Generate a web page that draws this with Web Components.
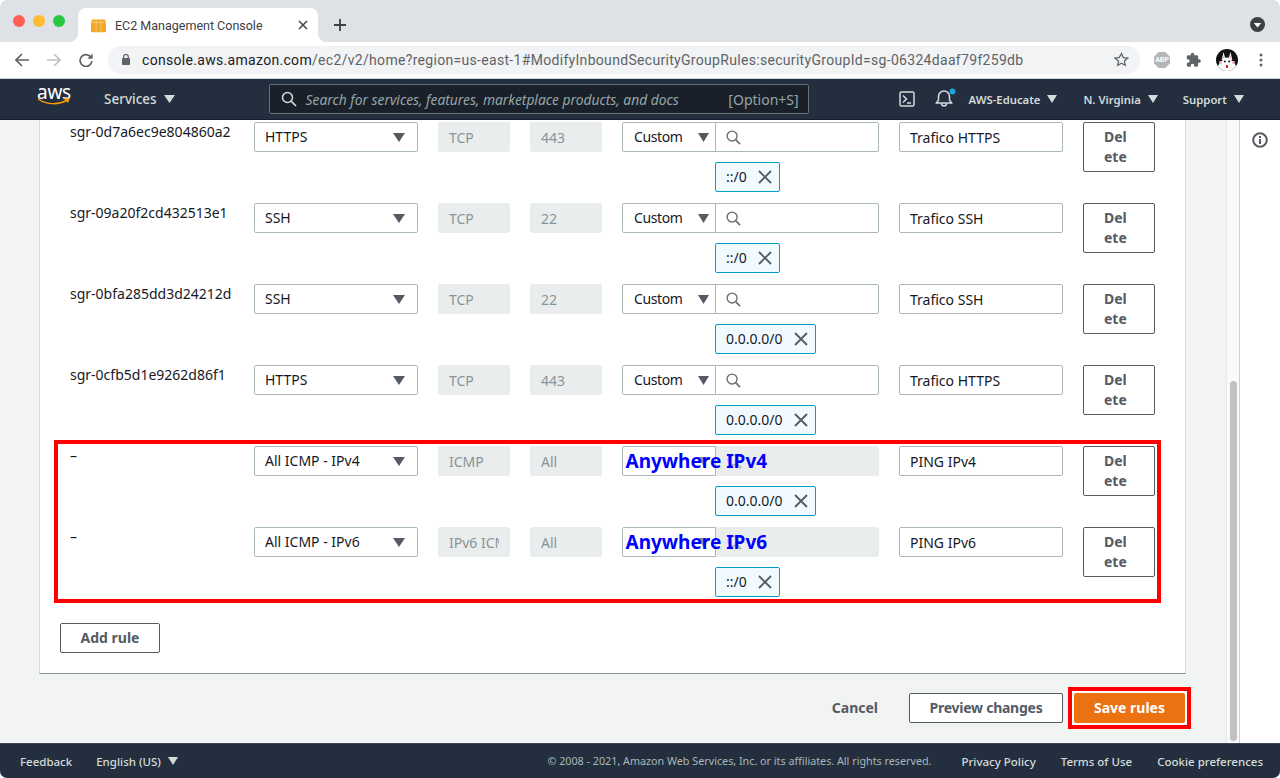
<!DOCTYPE html>
<html lang="en">
<head>
<meta charset="utf-8">
<title>EC2 Management Console</title>
<style>
  html, body { margin: 0; height: 100%; background: #fff; overflow: hidden; }
  body { font-family: "Noto Sans", "Open Sans", sans-serif; font-size: 14px; color: #16191f; }
</style>
</head>
<body>
<console-window>
  <browser-tabs slot="tabs" tab-title="EC2 Management Console"></browser-tabs>
  <browser-toolbar slot="toolbar" host-part="console.aws.amazon.com" path-part="/ec2/v2/home?region=us-east-1#ModifyInboundSecurityGroupRules:securityGroupId=sg-06324daaf79f259db"></browser-toolbar>
  <aws-nav slot="nav"></aws-nav>

  <rules-card>
    <rule-row rule-id="sgr-0d7a6ec9e804860a2" type="HTTPS" protocol="TCP" port="443" desc="Trafico HTTPS" chip="::/0"></rule-row>
    <rule-row rule-id="sgr-09a20f2cd432513e1" type="SSH" protocol="TCP" port="22" desc="Trafico SSH" chip="::/0"></rule-row>
    <rule-row rule-id="sgr-0bfa285dd3d24212d" type="SSH" protocol="TCP" port="22" desc="Trafico SSH" chip="0.0.0.0/0"></rule-row>
    <rule-row rule-id="sgr-0cfb5d1e9262d86f1" type="HTTPS" protocol="TCP" port="443" desc="Trafico HTTPS" chip="0.0.0.0/0"></rule-row>
    <red-frame stack>
      <rule-row rule-id="–" type="All ICMP - IPv4" protocol="ICMP" port="All" desc="PING IPv4" chip="0.0.0.0/0" note="Anywhere IPv4"></rule-row>
      <rule-row rule-id="–" type="All ICMP - IPv6" protocol="IPv6 ICMP" port="All" desc="PING IPv6" chip="::/0" note="Anywhere IPv6"></rule-row>
    </red-frame>
    <aws-button slot="add" style="width:100px">Add rule</aws-button>
  </rules-card>

  <form-actions></form-actions>
  <aws-footer slot="footer"></aws-footer>
</console-window>

<script>
const caret = (w, h, color) => `<svg width="${w}" height="${h}" viewBox="0 0 12 9" preserveAspectRatio="none" style="display:block;flex:none"><path d="M0 0h12L6 9z" fill="${color}"/></svg>`;

class ConsoleWindow extends HTMLElement {
  constructor() {
    super();
    this.attachShadow({ mode: "open" }).innerHTML = `
    <style>
      :host { display: flex; flex-direction: column; width: 1280px; height: 778px; border-radius: 7px; overflow: hidden; background: #fff; }
      .main { flex: 1; min-height: 0; display: flex; }
      .content { flex: 1; min-width: 0; background: #f2f3f3; border-right: 1px solid #e8e8e8; display: flex; flex-direction: column; }
      .scrollbar { width: 13px; background: #fafafa; border-right: 1px solid #cfd2d2; padding: 261px 2px 2px 3px; box-sizing: border-box; }
      .thumb { height: 100%; background: #c1c1c1; border-radius: 4px; }
      .side { width: 40px; background: #fff; display: flex; justify-content: center; padding-top: 12px; box-sizing: border-box; }
    </style>
    <slot name="tabs"></slot>
    <slot name="toolbar"></slot>
    <slot name="nav"></slot>
    <div class="main">
      <div class="content"><slot></slot></div>
      <div class="scrollbar"><div class="thumb"></div></div>
      <div class="side">
        <svg width="16" height="16" viewBox="0 0 16 16"><circle cx="8" cy="8" r="6.800" fill="none" stroke="#545b64" stroke-width="2"/><rect x="7" y="7" width="2" height="5" fill="#545b64"/><rect x="7" y="4" width="2" height="2" fill="#545b64"/></svg>
      </div>
    </div>
    <slot name="footer"></slot>`;
  }
}
customElements.define("console-window", ConsoleWindow);

class BrowserTabs extends HTMLElement {
  constructor() {
    super();
    this.attachShadow({ mode: "open" });
  }

  connectedCallback() {
    this.shadowRoot.innerHTML = `
    <style>
      :host { display: flex; align-items: flex-end; height: 42px; background: #dee1e6; flex: none; font-family: Roboto, sans-serif; }
      .lights { display: flex; gap: 8px; width: 78px; padding: 0 0 15px 13px; box-sizing: border-box; }
      .lights i { width: 12px; height: 12px; border-radius: 50%; }
      .tab { width: 240px; height: 34px; background: #fff; border-radius: 8px 8px 0 0; display: flex; align-items: center; padding: 0 10px 0 13px; box-sizing: border-box; position: relative; color: #3c4043; font-size: 12.5px; }
      .tab::before, .tab::after { content: ""; position: absolute; bottom: 0; width: 8px; height: 8px; }
      .tab::before { left: -8px; background: radial-gradient(circle at 0 0, #dee1e6 7.5px, #fff 8px); }
      .tab::after { right: -8px; background: radial-gradient(circle at 100% 0, #dee1e6 7.5px, #fff 8px); }
      .title { margin-left: 9px; flex: 1; white-space: nowrap; }
      .plus { margin: 0 0 10px 15px; }
      .menu { margin: 0 15px 10px auto; }
    </style>
    <div class="lights"><i style="background:#ff5f57"></i><i style="background:#febc2e"></i><i style="background:#28c840"></i></div>
    <div class="tab">
      <svg width="15" height="15" viewBox="0 0 15 15"><path d="M1 1.600h13l1 2.600v9a1 1 0 0 1-1 1H1a1 1 0 0 1-1-1v-9z" fill="#f5a623"/><path d="M0 4.400h15M5.200 1.600v3M9.800 1.600v3M5.200 4.400v10M9.800 4.400v10" stroke="#fcd58a" stroke-width=".7"/></svg>
      <span class="title">${this.getAttribute("tab-title")}</span>
      <svg width="10" height="10" viewBox="0 0 10 10"><path d="M1 1l8 8M9 1l-8 8" stroke="#45494d" stroke-width="1.600"/></svg>
    </div>
    <svg class="plus" width="14" height="14" viewBox="0 0 14 14"><path d="M7 1v12M1 7h12" stroke="#3c4043" stroke-width="1.800"/></svg>
    <svg class="menu" width="15" height="15" viewBox="0 0 15 15"><circle cx="7.500" cy="7.500" r="7.500" fill="#3c4043"/><path d="M3.800 6h7.400l-3.700 4.400z" fill="#fff"/></svg>`;
  }
}
customElements.define("browser-tabs", BrowserTabs);

class BrowserToolbar extends HTMLElement {
  constructor() {
    super();
    this.attachShadow({ mode: "open" });
  }

  connectedCallback() {
    this.shadowRoot.innerHTML = `
    <style>
      :host { display: flex; align-items: center; height: 37px; background: #fff; flex: none; padding: 0 0 1px 0; box-sizing: border-box; font-family: Roboto, sans-serif; border-bottom: 1px solid #d0d3d8; }
      .nav { display: flex; width: 108px; padding-left: 15px; gap: 18px; box-sizing: border-box; }
      .omni { width: 1032px; height: 28px; background: #f1f3f4; border-radius: 14px; display: flex; align-items: center; padding: 0 11px 0 14px; box-sizing: border-box; }
      .url { margin-left: 12px; flex: 1; font-size: 14px; letter-spacing: .31px; color: #5f6368; white-space: nowrap; }
      .url b { font-weight: 400; color: #202124; }
      .right { display: flex; align-items: center; }
      .abp { font: 700 6.500px "Liberation Sans", sans-serif; fill: #fff; }
    </style>
    <div class="nav">
      <svg width="14" height="14" viewBox="0 0 14 14"><path d="M14 7H1.500M7 1L1 7l6 6" fill="none" stroke="#5f6368" stroke-width="1.700"/></svg>
      <svg width="14" height="14" viewBox="0 0 14 14"><path d="M0 7h12.500M7 1l6 6-6 6" fill="none" stroke="#bdc1c6" stroke-width="1.700"/></svg>
      <svg width="14" height="14" viewBox="0 0 14 14"><path d="M12 4.400A5.900 5.900 0 1 0 12.900 8" fill="none" stroke="#5f6368" stroke-width="1.700"/><path d="M13.600 0.600v5.200H8.400z" fill="#5f6368"/></svg>
    </div>
    <div class="omni">
      <svg width="8" height="11" viewBox="0 0 8 11" style="flex:none"><path d="M1.700 4V2.700a2.300 2.300 0 0 1 4.600 0V4" fill="none" stroke="#5f6368" stroke-width="1.200"/><rect y="4" width="8" height="7" rx="1" fill="#5f6368"/></svg>
      <span class="url"><b>${this.getAttribute("host-part")}</b>${this.getAttribute("path-part")}</span>
      <svg width="15" height="15" viewBox="0 0 24 24" style="flex:none"><path d="M12 2.500l2.900 6.400 7 .8-5.200 4.700 1.400 6.900-6.100-3.500-6.100 3.500 1.400-6.900L1.100 9.700l7-.8z" fill="none" stroke="#5f6368" stroke-width="2"/></svg>
    </div>
    <div class="right">
      <svg width="16" height="16" viewBox="0 0 16 16" style="margin-left:14px"><path d="M4.700 0h6.600L16 4.700v6.600L11.300 16H4.700L0 11.300V4.700z" fill="#b3b5b8"/><text class="abp" x="8" y="10.400" text-anchor="middle">ABP</text></svg>
      <svg width="17" height="16" viewBox="0 0 24 24" style="margin-left:15px"><path d="M20.500 11H19V7a2 2 0 0 0-2-2h-4V3.500a2.500 2.500 0 0 0-5 0V5H4a2 2 0 0 0-2 2v3.800h1.500a2.700 2.700 0 0 1 0 5.400H2V20a2 2 0 0 0 2 2h3.800v-1.500a2.700 2.700 0 0 1 5.400 0V22H17a2 2 0 0 0 2-2v-4h1.500a2.500 2.500 0 0 0 0-5z" fill="#5f6368"/></svg>
      <svg width="22" height="22" viewBox="0 0 22 22" style="margin-left:14px">
        <circle cx="11" cy="11" r="11" fill="#111"/>
        <path d="M1.800 17a11 11 0 0 0 18.400 0L17 12H5z" fill="#fff"/>
        <path d="M7.500 3l2.200 8h-4zM14.500 3l-2.200 8h4z" fill="#fff"/>
        <path d="M7.500 5.500l1 5H6.600zM14.500 5.500l-1 5h1.900z" fill="#f0b0b8"/>
        <circle cx="11" cy="13.500" r="5" fill="#fff"/>
        <circle cx="8.800" cy="12.500" r="1" fill="#111"/><circle cx="13.200" cy="12.500" r="1" fill="#111"/>
        <circle cx="4.500" cy="13.500" r="1.400" fill="#f0b0b8"/><circle cx="17.500" cy="13.500" r="1.400" fill="#f0b0b8"/>
        <path d="M10 16h2v3h-2z" fill="#d22"/>
      </svg>
      <svg width="4" height="14" viewBox="0 0 4 14" style="margin-left:21px"><circle cx="2" cy="2" r="1.500" fill="#5f6368"/><circle cx="2" cy="7" r="1.500" fill="#5f6368"/><circle cx="2" cy="12" r="1.500" fill="#5f6368"/></svg>
    </div>`;
  }
}
customElements.define("browser-toolbar", BrowserToolbar);

class AwsNav extends HTMLElement {
  constructor() {
    super();
    this.attachShadow({ mode: "open" });
  }

  connectedCallback() {
    this.shadowRoot.innerHTML = `
    <style>
      :host { display: flex; align-items: center; height: 41px; background: #232f3e; flex: none; color: #d5dbdb; box-sizing: border-box; border-bottom: 1px solid #161e2d; }
      .logo { width: 34px; margin-left: 37px; display: flex; flex-direction: column; align-items: center; color: #fff; font-size: 19px; line-height: 16px; height: 30px; letter-spacing: -.3px; }
      .logo svg { margin-top: -2px; }
      .menu { display: inline-flex; align-items: center; font-weight: 500; }
      .services { margin-left: 33px; font-size: 13.5px; gap: 7px; }
      .search { margin-left: 94px; width: 540px; height: 30px; box-sizing: border-box; background: #1a2029; border: 1px solid #687078; border-radius: 2px; display: flex; align-items: center; padding: 0 9px 0 11px; color: #95a5a6; }
      .search em { margin-left: 9px; flex: 1; font-size: 13.8px; white-space: nowrap; }
      .search span { font-size: 14px; }
      .small { font-size: 11.3px; font-weight: 600; gap: 7px; }
    </style>
    <div class="logo">aws<svg width="34" height="7" viewBox="0 0 34 7"><path d="M1 1c9 6 21 6 29 1" fill="none" stroke="#f90" stroke-width="1.500"/><path d="M27 .5l6-.5-2 5z" fill="#f90"/></svg></div>
    <span class="menu services">Services ${caret(11, 8, "#d5dbdb")}</span>
    <div class="search">
      <svg width="16" height="16" viewBox="0 0 16 16" style="flex:none"><circle cx="6.500" cy="6.500" r="5" fill="none" stroke="#d5dbdb" stroke-width="1.500"/><path d="M10 10l5 5" stroke="#d5dbdb" stroke-width="1.700"/></svg>
      <em>Search for services, features, marketplace products, and docs</em>
      <span>[Option+S]</span>
    </div>
    <svg width="16" height="16" viewBox="0 0 16 16" style="margin-left:90px"><rect x="1" y="1" width="14" height="14" rx="1.500" fill="none" stroke="#d5dbdb" stroke-width="1.500"/><path d="M4 4.500L7.500 8 4 11.500M8 12h4" fill="none" stroke="#d5dbdb" stroke-width="1.500"/></svg>
    <svg width="24" height="20" viewBox="0 0 24 20" style="margin-left:20px;margin-top:-2px"><path d="M1.500 15h15l-2-3V8.500a5.500 5.500 0 0 0-11 0V12z" fill="none" stroke="#d5dbdb" stroke-width="1.500"/><path d="M6.500 15.500a2.500 2.500 0 0 0 5 0" fill="none" stroke="#d5dbdb" stroke-width="1.500"/><circle cx="17.500" cy="3.500" r="3" fill="#1da5d8"/></svg>
    <span class="menu small" style="margin-left:10px">AWS-Educate ${caret(10, 8, "#d5dbdb")}</span>
    <span class="menu small" style="margin-left:26px">N. Virginia ${caret(10, 8, "#d5dbdb")}</span>
    <span class="menu small" style="margin-left:25px">Support ${caret(10, 8, "#d5dbdb")}</span>`;
  }
}
customElements.define("aws-nav", AwsNav);

class AwsButton extends HTMLElement {
  constructor() {
    super();
    this.attachShadow({ mode: "open" }).innerHTML = `
    <style>
      :host { display: inline-flex; align-items: center; justify-content: center; box-sizing: border-box; min-height: 30px; padding: 0 20px; border: 1px solid #545b64; border-radius: 2px; background: #fff; color: #545b64; font-weight: 700; font-size: 14px; line-height: 20px; white-space: nowrap; }
      :host([variant="primary"]) { background: #ec7211; border-color: #ec7211; color: #fff; }
      :host([variant="link"]) { background: none; border-color: transparent; }
      :host([variant="wrap"]) { width: 72px; height: 50px; white-space: normal; word-break: break-all; }
    </style>
    <slot></slot>`;
  }
}
customElements.define("aws-button", AwsButton);

class RedFrame extends HTMLElement {
  constructor() {
    super();
    this.attachShadow({ mode: "open" }).innerHTML = `
    <style>
      :host { display: block; position: relative; }
      :host([stack]) { display: grid; row-gap: 11px; }
      .frame { position: absolute; inset: -6px; border: 4px solid #f00; pointer-events: none; }
      :host([tight]) .frame { box-shadow: inset 0 0 0 2px #fff; }
    </style>
    <slot></slot>
    <div class="frame"></div>`;
  }
}
customElements.define("red-frame", RedFrame);

class RuleRow extends HTMLElement {
  constructor() {
    super();
    this.attachShadow({ mode: "open" });
  }

  connectedCallback() {
    const a = (n) => this.getAttribute(n);
    const note = a("note");
    this.shadowRoot.innerHTML = `
    <style>
      :host { display: grid; grid-template-columns: 164px 164px 72px 72px 257px 164px 72px; column-gap: 20px; padding-left: 10px; height: 70px; font-size: 14px; line-height: 20px; color: #16191f; }
      .box { height: 30px; box-sizing: border-box; display: flex; align-items: center; border: 1px solid #aab7b8; border-radius: 2px; background: #fff; }
      .select { padding: 0 12px 0 10px; justify-content: space-between; }
      .off { background: #eaeded; border-color: #eaeded; color: #879596; padding: 2px 10px 0; }
      .off span { display: block; overflow: hidden; white-space: nowrap; }
      .source { position: relative; }
      .pair { display: flex; }
      .custom { width: 94px; flex: none; border-radius: 2px 0 0 2px; padding: 0 6px 0 11px; justify-content: space-between; letter-spacing: -.4px; }
      .locked .custom { justify-content: flex-end; }
      .find { flex: 1; margin-left: -1px; border-radius: 0 2px 2px 0; padding-left: 10px; }
      .locked .find { background: #eaeded; border-color: #eaeded; margin-left: 0; }
      .chip { display: inline-flex; align-items: center; height: 30px; box-sizing: border-box; margin: 10px 0 0 93px; padding: 0 7px 0 10px; gap: 11px; background: #f1faff; border: 1px solid #00a1c9; border-radius: 2px; }
      .desc { padding: 2px 10px 0; white-space: nowrap; }
      .note { position: absolute; left: 3.500px; top: 3px; color: #00f; font: 700 19px/24px "Noto Sans", sans-serif; white-space: nowrap; }
    </style>
    <div class="id">${a("rule-id")}</div>
    <div class="box select">${a("type")} ${caret(12, 9, "#545b64")}</div>
    <div class="box off"><span>${a("protocol")}</span></div>
    <div class="box off"><span>${a("port")}</span></div>
    <div class="source ${note ? "locked" : ""}">
      <div class="pair">
        <div class="box custom">${note ? "" : "Custom "}${caret(11, 9, note ? "#8a9096" : "#545b64")}</div>
        <div class="box find"><svg width="15" height="15" viewBox="0 0 16 16"><circle cx="6.500" cy="6.500" r="5.300" fill="none" stroke="${note ? "#a8aeb2" : "#687078"}" stroke-width="1.500"/><path d="M10.300 10.300l4.700 4.700" stroke="${note ? "#a8aeb2" : "#687078"}" stroke-width="1.800"/></svg></div>
      </div>
      <div class="chip">${a("chip")}<svg width="14" height="14" viewBox="0 0 14 14"><path d="M1 1l12 12M13 1L1 13" stroke="#545b64" stroke-width="1.800"/></svg></div>
      ${note ? `<div class="note">${note}</div>` : ""}
    </div>
    <div class="box desc">${a("desc")}</div>
    <div><aws-button variant="wrap">Delete</aws-button></div>`;
  }
}
customElements.define("rule-row", RuleRow);

class RulesCard extends HTMLElement {
  constructor() {
    super();
    this.attachShadow({ mode: "open" }).innerHTML = `
    <style>
      :host { display: block; margin: 0 40px 0 39px; background: #fff; flex: none; box-sizing: border-box; height: 554px; padding: 2px 30px 0 20px; border: solid #d5dbdb; border-width: 0 1px 1px 1px; border-bottom-color: #879596; }
      .rows { display: grid; row-gap: 11px; }
      .add { margin-top: 26px; }
    </style>
    <div class="rows"><slot></slot></div>
    <div class="add"><slot name="add"></slot></div>`;
  }
}
customElements.define("rules-card", RulesCard);

class FormActions extends HTMLElement {
  constructor() {
    super();
    this.attachShadow({ mode: "open" }).innerHTML = `
    <style>
      :host { display: flex; justify-content: flex-end; align-items: center; padding: 19px 41px 0 0; }
      .cancel { margin-right: 10px; }
      .preview { margin-right: 11px; letter-spacing: -.25px; }
    </style>
    <aws-button class="cancel" variant="link">Cancel</aws-button>
    <aws-button class="preview" style="width:154px;padding:0">Preview changes</aws-button>
    <red-frame tight><aws-button variant="primary" style="width:111px;padding:0">Save rules</aws-button></red-frame>`;
  }
}
customElements.define("form-actions", FormActions);

class AwsFooter extends HTMLElement {
  constructor() {
    super();
    this.attachShadow({ mode: "open" }).innerHTML = `
    <style>
      :host { display: flex; align-items: center; height: 35px; flex: none; background: #232f3e; color: #d5dbdb; font-size: 11.5px; font-weight: 500; padding: 0 17px 0 20px; box-sizing: border-box; border-top: 1px solid #3d4856; }
      .lang { display: inline-flex; align-items: center; gap: 7px; margin-left: 24px; }
      .copy { margin-left: auto; color: #aab7b8; font-weight: 400; font-size: 10.75px; margin-right: 30px; }
      .link { margin-left: 25px; }
      .copy + .link { margin-left: 0; }
    </style>
    <span>Feedback</span>
    <span class="lang">English (US) ${caret(10, 8, "#d5dbdb")}</span>
    <span class="copy">© 2008 - 2021, Amazon Web Services, Inc. or its affiliates. All rights reserved.</span>
    <span class="link">Privacy Policy</span>
    <span class="link">Terms of Use</span>
    <span class="link">Cookie preferences</span>`;
  }
}
customElements.define("aws-footer", AwsFooter);
</script>
</body>
</html>
